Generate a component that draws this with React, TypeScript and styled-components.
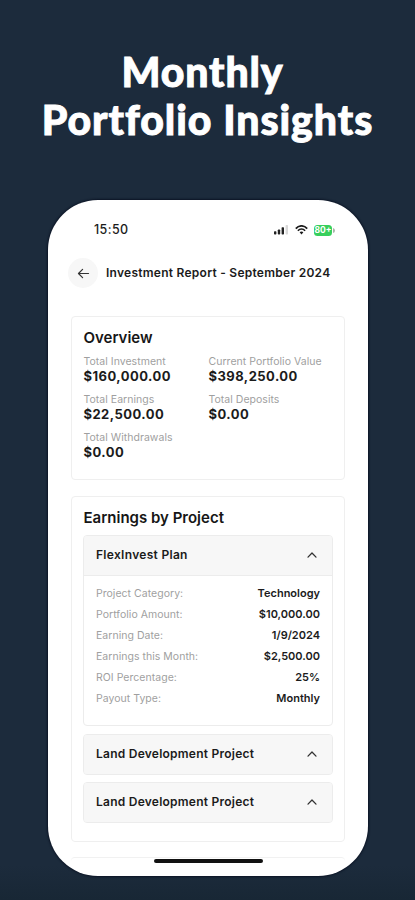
import React from "react";
import styled, { createGlobalStyle } from "styled-components";

const GlobalStyle = createGlobalStyle`
  *, *::before, *::after { box-sizing: border-box; }
  body { margin: 0; background: #1c2b3c; font-family: Inter, "Liberation Sans", sans-serif; }
`;

const Page = styled.main`
  width: 415px;
  height: 900px;
  overflow: hidden;
  display: flex;
  flex-direction: column;
  background: linear-gradient(#1c2b3c 0, #1c2b3c 865px, #182735 900px);
`;

const Headline = styled.h1`
  margin: 0;
  height: 200px;
  padding-top: 48px;
  flex: none;
  display: flex;
  flex-direction: column;
  align-items: center;
  font: 900 41px/48px Lato, sans-serif;
  -webkit-text-stroke: 0.9px #fff;
  color: #fff;
  white-space: nowrap;
`;

const HeadlineLine = styled.span<{ $track: number; $shift?: number }>`
  letter-spacing: ${(p) => p.$track}px;
  padding-right: ${(p) => p.$shift ?? 0}px;
`;

const Phone = styled.section`
  width: 320px;
  height: 676px;
  margin-left: 48px;
  flex: none;
  overflow: hidden;
  display: flex;
  flex-direction: column;
  background: #fff;
  border-radius: 50px;
  box-shadow: 0 0 2px 1px #0b1425;
  color: #141414;
`;

const StatusBar = styled.div`
  height: 58px;
  padding: 2px 33px 0 46px;
  flex: none;
  display: flex;
  align-items: center;
  justify-content: space-between;
`;

const Text = styled.span<{ $size: number; $weight?: number; $track?: number; $color?: string; $line?: number }>`
  font-size: ${(p) => p.$size}px;
  font-weight: ${(p) => p.$weight ?? 600};
  letter-spacing: ${(p) => p.$track ?? 0}px;
  color: ${(p) => p.$color ?? "#1b1b1b"};
  line-height: ${(p) => p.$line ?? 16}px;
  white-space: nowrap;
`;

const StatusIcons = styled.div`
  display: flex;
  align-items: center;
  gap: 6px;
`;

const Header = styled.header`
  height: 58px;
  padding: 0 20px 28px;
  flex: none;
  display: flex;
  align-items: center;
  gap: 8px;
`;

const BackButton = styled.button`
  width: 30px;
  height: 30px;
  padding: 0;
  border: 0;
  border-radius: 50%;
  flex: none;
  display: grid;
  place-items: center;
  background: #f7f7f7;
`;

const Card = styled.section<{ $height: number }>`
  height: ${(p) => p.$height}px;
  width: 274px;
  margin: 0 0 16px 23px;
  padding: 11px 11px 0;
  flex: none;
  display: flex;
  flex-direction: column;
  border: 1px solid #efefef;
  border-radius: 4px;
`;

const CardTitle = styled.h2<{ $gap: number }>`
  margin: 0 0 ${(p) => p.$gap}px 0.5px;
  flex: none;
  font-size: 15px;
  font-weight: 600;
  line-height: 20px;
  color: #161616;
`;

const Stats = styled.div`
  padding-left: 0.5px;
  display: grid;
  grid-template-columns: 125px 1fr;
  row-gap: 8px;
`;

const Stat = styled.div`
  display: flex;
  flex-direction: column;
`;

const Accordion = styled.div<{ $open?: boolean }>`
  width: 250px;
  height: ${(p) => (p.$open ? 191 : 41)}px;
  margin-bottom: ${(p) => (p.$open ? 8 : 7)}px;
  flex: none;
  border: 1px solid #ececec;
  border-radius: 4px;
  overflow: hidden;
`;

const AccordionHead = styled.div`
  height: 39px;
  padding: 0 15px 1px 12px;
  display: flex;
  align-items: center;
  justify-content: space-between;
  background: #f7f7f7;
  box-shadow: 0 1px 0 #ececec;
`;

const Details = styled.div`
  padding: 8px 12px 0;
`;

const Detail = styled.div`
  height: 21px;
  display: flex;
  align-items: center;
  justify-content: space-between;
`;

const BottomCard = styled.div`
  width: 274px;
  height: 19px;
  margin-left: 23px;
  margin-top: -1px;
  flex: none;
  display: flex;
  justify-content: center;
  border-top: 1px solid #f1f1f1;
  border-radius: 4px 4px 0 0;
`;

const HomeIndicator = styled.div`
  width: 109px;
  height: 4px;
  margin-top: 1px;
  margin-left: 1px;
  border-radius: 2px;
  background: #111;
`;

const Battery = styled.div`
  display: flex;
  align-items: center;
  gap: 1px;
`;

const BatteryBody = styled.div`
  width: 18px;
  height: 11px;
  border-radius: 3.5px;
  display: flex;
  align-items: center;
  justify-content: center;
  background: #37cf5c;
  color: #fff;
  font-size: 8.5px;
  font-weight: 700;
  line-height: 11px;
`;

const Signal = () => (
  <svg width="15" height="10" viewBox="0 0 15 10">
    <rect x="0" y="6.3" width="2.4" height="3.2" rx=".7" fill="#222" />
    <rect x="3.8" y="4.5" width="2.4" height="5" rx=".7" fill="#222" />
    <rect x="7.6" y="2.3" width="2.4" height="7.2" rx=".7" fill="#222" />
    <rect x="11.6" y="0" width="2.4" height="9.5" rx=".7" fill="#d8d8d8" />
  </svg>
);

const Wifi = () => (
  <svg width="13" height="10" viewBox="0 0 13 10" fill="none" stroke="#1b1b1b" strokeWidth="1.7">
    <path d="M.8 3.6C4-.1 9-.1 12.2 3.6M2.9 5.7c2.1-2.3 5.1-2.3 7.2 0" />
    <path d="M4.6 7.3c1.1-1.1 2.7-1.1 3.8 0L6.5 9.6Z" fill="#1b1b1b" stroke="none" />
  </svg>
);

const BatteryTip = () => (
  <svg width="2" height="5" viewBox="0 0 2 5">
    <path d="M0 0Q2 .5 2 2.5T0 5Z" fill="#a8b5aa" />
  </svg>
);

const BackArrow = () => (
  <svg width="13" height="11" viewBox="0 0 14 12" fill="none" stroke="#333" strokeWidth="1.3" strokeLinecap="round" strokeLinejoin="round">
    <path d="M12.5 6H1.5M6 1.5 1.5 6 6 10.5" />
  </svg>
);

const Chevron = () => (
  <svg width="10" height="6" viewBox="0 0 10 6" fill="none" stroke="#333" strokeWidth="1.3" strokeLinecap="round" strokeLinejoin="round">
    <path d="M1 5.1 5 1l4 4.1" />
  </svg>
);

const stats = [
  ["Total Investment", "$160,000.00"],
  ["Current Portfolio Value", "$398,250.00"],
  ["Total Earnings", "$22,500.00"],
  ["Total Deposits", "$0.00"],
  ["Total Withdrawals", "$0.00"],
];

const details = [
  ["Project Category:", "Technology"],
  ["Portfolio Amount:", "$10,000.00"],
  ["Earning Date:", "1/9/2024"],
  ["Earnings this Month:", "$2,500.00"],
  ["ROI Percentage:", "25%"],
  ["Payout Type:", "Monthly"],
];

export default function App() {
  return (
    <Page>
      <GlobalStyle />
      <Headline>
        <HeadlineLine $track={0.85} $shift={10}>Monthly</HeadlineLine>
        <HeadlineLine $track={0.95}>Portfolio Insights</HeadlineLine>
      </Headline>
      <Phone>
        <StatusBar>
          <Text $size={12.5} $weight={500} $track={0.4}>15:50</Text>
          <StatusIcons>
            <Signal />
            <Wifi />
            <Battery>
              <BatteryBody>80+</BatteryBody>
              <BatteryTip />
            </Battery>
          </StatusIcons>
        </StatusBar>
        <Header>
          <BackButton aria-label="Back"><BackArrow /></BackButton>
          <Text $size={12} $track={0.26}>Investment Report - September 2024</Text>
        </Header>
        <Card $height={164}>
          <CardTitle $gap={6}>Overview</CardTitle>
          <Stats>
            {stats.map(([label, value]) => (
              <Stat key={label}>
                <Text $size={10.5} $weight={400} $color="#9f9f9f" $track={0.03} $line={15}>{label}</Text>
                <Text $size={13} $weight={650} $track={0.46} $line={15}>{value}</Text>
              </Stat>
            ))}
          </Stats>
        </Card>
        <Card $height={346}>
          <CardTitle $gap={7}>Earnings by Project</CardTitle>
          <Accordion $open>
            <AccordionHead>
              <Text $size={12} $track={0.3}>FlexInvest Plan</Text>
              <Chevron />
            </AccordionHead>
            <Details>
              {details.map(([label, value]) => (
                <Detail key={label}>
                  <Text $size={10.5} $weight={400} $color="#9f9f9f" $track={0.03}>{label}</Text>
                  <Text $size={11} $line={15}>{value}</Text>
                </Detail>
              ))}
            </Details>
          </Accordion>
          {[0, 1].map((i) => (
            <Accordion key={i}>
              <AccordionHead>
                <Text $size={12} $track={0.24}>Land Development Project</Text>
                <Chevron />
              </AccordionHead>
            </Accordion>
          ))}
        </Card>
        <BottomCard><HomeIndicator /></BottomCard>
      </Phone>
    </Page>
  );
}
